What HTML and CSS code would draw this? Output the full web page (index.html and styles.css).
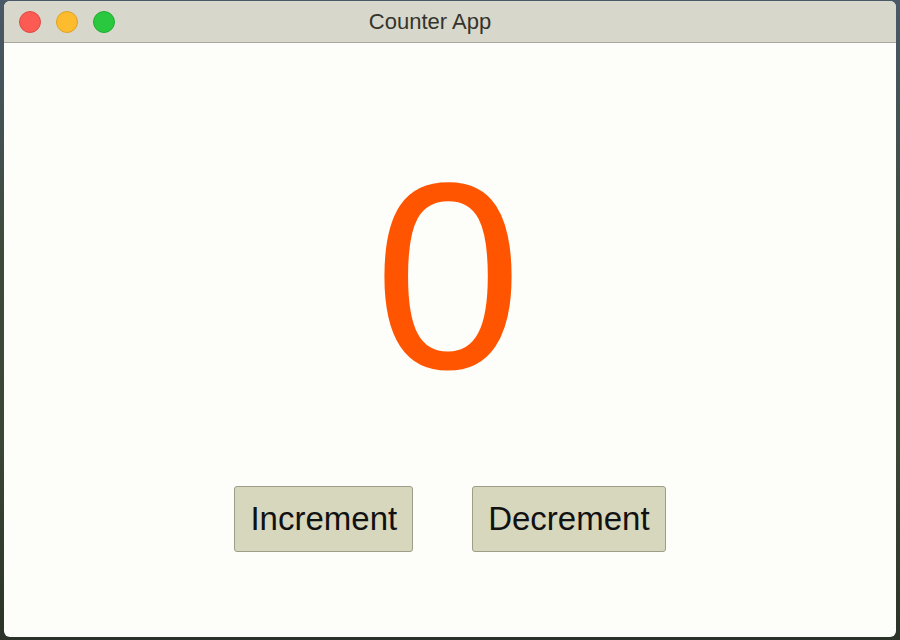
FILE: index.html
```html
<!DOCTYPE html>
<html>
<head>
<meta charset="utf-8">
<link rel="stylesheet" href="styles.css">
</head>
<body>
<div class="window">
  <div class="titlebar">
    <div class="lights">
      <span class="light red"></span>
      <span class="light yellow"></span>
      <span class="light green"></span>
    </div>
    <div class="title">Counter App</div>
  </div>
  <div class="content">
    <div class="count">0</div>
    <div class="buttons">
      <button class="btn">Increment</button>
      <button class="btn">Decrement</button>
    </div>
  </div>
</div>
</body>
</html>
```
FILE: styles.css
```css
html, body {
  margin: 0;
  padding: 0;
  width: 900px;
  height: 640px;
  overflow: hidden;
}
body {
  background: linear-gradient(180deg, #4a5868 0%, #3d4a3a 40%, #3a4636 70%, #2b3328 100%);
  font-family: "Liberation Sans", Arial, sans-serif;
  padding: 1px 4px 3px 4px;
  box-sizing: border-box;
}
.window {
  width: 892px;
  height: 636px;
  background: #fdfdf9;
  border-radius: 6px;
  overflow: hidden;
  display: flex;
  flex-direction: column;
}
.titlebar {
  position: relative;
  height: 41px;
  background: #d8d7cc;
  border-bottom: 1px solid #a9a89f;
  display: flex;
  align-items: center;
  justify-content: center;
  flex-shrink: 0;
}
.lights {
  position: absolute;
  left: 15px;
  top: 10px;
  display: flex;
  gap: 15px;
}
.light {
  width: 22px;
  height: 22px;
  border-radius: 50%;
  box-sizing: border-box;
}
.red { background: #fc5b53; border: 1px solid #df4a42; }
.yellow { background: #fdbc2e; border: 1px solid #dea123; }
.green { background: #2ac83f; border: 1px solid #1eac2d; }
.title {
  font-size: 22px;
  color: #34342c;
  margin-right: 40px;
}
.content {
  flex: 1;
  display: flex;
  flex-direction: column;
  align-items: center;
}
.count {
  margin-top: 100px;
  font-size: 266px;
  line-height: 1;
  color: #ff5500;
  margin-left: -4px;
}
.buttons {
  margin-top: 77px;
  display: flex;
  gap: 59px;
}
.btn {
  font-family: "Liberation Sans", Arial, sans-serif;
  font-size: 33px;
  color: #111;
  background: #d7d7bd;
  border: 1px solid #9e9e88;
  border-radius: 3px;
  height: 66px;
  padding: 0 15px;
  margin: 0;
}
```
